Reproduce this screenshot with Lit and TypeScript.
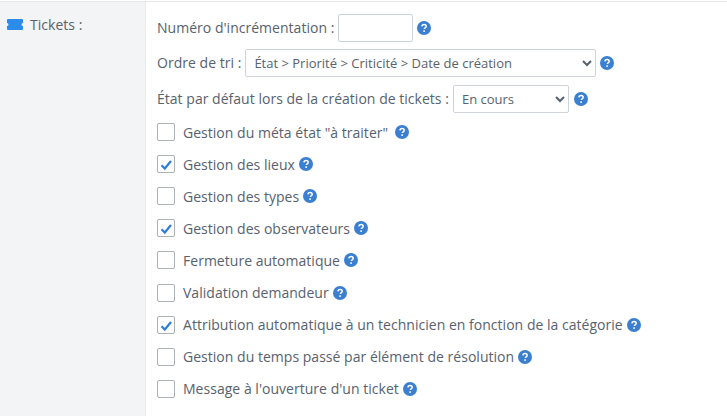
import { LitElement, html, css, svg } from "lit";
import { customElement } from "lit/decorators.js";

const items: [string, boolean, boolean][] = [
  ['Gestion du méta état "à traiter"', false, true],
  ["Gestion des lieux", true, false],
  ["Gestion des types", false, false],
  ["Gestion des observateurs", true, false],
  ["Fermeture automatique", false, false],
  ["Validation demandeur", false, false],
  ["Attribution automatique à un technicien en fonction de la catégorie", true, false],
  ["Gestion du temps passé par élément de résolution", false, false],
  ["Message à l'ouverture d'un ticket", false, false],
];

const help = (cls = "help") => html`<svg class=${cls} viewBox="0 0 14 14" width="14" height="14">
  <circle cx="7" cy="7" r="7" fill="#3a7fd0"></circle>
  <path d="M4.900 5.400C5 4.200 5.900 3.400 7.100 3.400c1.300 0 2.100.8 2.100 1.800 0 .9-.5 1.300-1.100 1.700-.5.3-.7.6-.7 1.200" fill="none" stroke="#fff" stroke-width="1.500"></path>
  <rect x="6.300" y="9.300" width="1.600" height="1.600" fill="#fff"></rect>
</svg>`;

const check = svg`<path d="M3.500 9.200l3.300 3.300 6.200-7.500" fill="none" stroke="#2f7fd8" stroke-width="2.200"></path>`;

@customElement("app-root")
export class AppRoot extends LitElement {
  static styles = css`
    :host {
      display: block;
      width: 727px;
      height: 416px;
      overflow: hidden;
      background: #fff;
      font-family: "Open Sans", sans-serif;
      font-size: 14px;
      letter-spacing: 0.025px;
      color: #57626e;
    }
    .frame {
      display: flex;
      height: 415px;
      margin-top: 1px;
      border-top: 1px solid #e6e8ea;
    }
    .side {
      width: 146px;
      flex: none;
      box-sizing: border-box;
      background: #f3f4f6;
      border-right: 1px solid #e8e9eb;
      padding: 13px 0 0 7px;
      display: flex;
      align-items: flex-start;
      gap: 7px;
      height: 100%;
    }
    .ticket { margin-top: 4px; }
    .main {
      flex: 1;
      padding: 12px 0 0 11px;
      min-width: 0;
    }
    .line {
      display: flex;
      align-items: center;
      white-space: nowrap;
    }
    .line span { position: relative; top: -0.5px; }
    .line.first { height: 28px; }
    .line.sort { height: 28px; margin-top: 7px; }
    .line.state { height: 28px; margin-top: 8px; }
    .help { flex: none; }
    .field {
      box-sizing: border-box;
      height: 28px;
      border: 1px solid #ced4da;
      border-radius: 2px;
      background: #fff;
      font: 13px "Open Sans", sans-serif;
      letter-spacing: 0;
      color: #57626e;
      padding: 0 4px;
      margin: 0;
    }
    input.field { width: 75px; margin: 0 4px 0 4px; }
    select.s1 { width: 351px; margin: 0 4px 0 4px; padding-left: 4px; }
    select.s2 { width: 116px; margin: 0 5px 0 4px; padding-left: 4px; }
    .checks { margin-top: 3px; }
    .row {
      display: flex;
      align-items: center;
      height: 32.1px;
      white-space: nowrap;
    }
    .box {
      flex: none;
      box-sizing: border-box;
      width: 18px;
      height: 18px;
      border: 1px solid #adb2b7;
      border-radius: 2px;
      background: #fff;
      margin-right: 8px;
      display: block;
    }
    .box svg { display: block; }
    .row .help { margin-left: 4px; }
    .row .help.wide { margin-left: 7px; }
  `;

  render() {
    return html`<div class="frame">
      <div class="side">
        <svg class="ticket" width="16" height="11" viewBox="0 0 16 11">
          <path d="M1 0h14a1 1 0 0 1 1 1v3a1.500 1.500 0 0 0 0 3v3a1 1 0 0 1-1 1H1a1 1 0 0 1-1-1V7a1.500 1.500 0 0 0 0-3V1a1 1 0 0 1 1-1z" fill="#2b8cec"></path>
        </svg>
        <span>Tickets :</span>
      </div>
      <div class="main">
        <div class="line first">
          <span>Numéro d'incrémentation :</span>
          <input class="field" type="text" />
          ${help()}
        </div>
        <div class="line sort">
          <span>Ordre de tri :</span>
          <select class="field s1"><option>État &gt; Priorité &gt; Criticité &gt; Date de création</option></select>
          ${help()}
        </div>
        <div class="line state">
          <span>État par défaut lors de la création de tickets :</span>
          <select class="field s2"><option>En cours</option></select>
          ${help()}
        </div>
        <div class="checks">
          ${items.map(
            ([label, on, wide]) => html`<div class="row">
              <span class="box">${on ? html`<svg width="16" height="16" viewBox="0 0 16 16">${check}</svg>` : ""}</span>
              <span>${label}</span>
              ${help(wide ? "help wide" : "help")}
            </div>`
          )}
        </div>
      </div>
    </div>`;
  }
}
